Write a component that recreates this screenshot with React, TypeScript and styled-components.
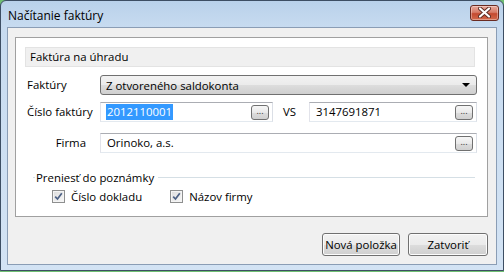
import React from 'react'
import styled, {createGlobalStyle} from 'styled-components'

const GlobalStyle = createGlobalStyle`
  html, body {
    margin: 0;
    padding: 0;
    background: #6fbf73;
  }
  body {
    font-family: 'Open Sans', 'Noto Sans', sans-serif;
    font-size: 11.4px;
    color: #000;
  }
`

export default function App() {
  return (
    <>
      <GlobalStyle />
      <Window>
        <TitleBar>
          <Title>Načítanie faktúry</Title>
          <CloseButton aria-label="close">
            <svg width="13" height="11" viewBox="0 0 13 11">
              <path
                d="M2 1.5 L11 9.5 M11 1.5 L2 9.5"
                stroke="#5a2a22"
                strokeWidth="4"
                strokeLinecap="round"
              />
              <path
                d="M2 1.5 L11 9.5 M11 1.5 L2 9.5"
                stroke="#fff"
                strokeWidth="2.2"
                strokeLinecap="round"
              />
            </svg>
          </CloseButton>
        </TitleBar>
        <Client>
          <Panel>
            <Header>Faktúra na úhradu</Header>
            <Form>
              <Label>Faktúry</Label>
              <Combo>
                <span>Z otvoreného saldokonta</span>
                <Arrow />
              </Combo>

              <Label>Číslo faktúry</Label>
              <SplitRow>
                <TextBox>
                  <Selected>2012110001</Selected>
                  <DotsButton>...</DotsButton>
                </TextBox>
                <VsLabel>VS</VsLabel>
                <TextBox>
                  <Value>3147691871</Value>
                  <DotsButton>...</DotsButton>
                </TextBox>
              </SplitRow>

              <Label align="right">Firma</Label>
              <TextBox>
                <Value>Orinoko, a.s.</Value>
                <DotsButton>...</DotsButton>
              </TextBox>
            </Form>
            <Group>
              <GroupTitle>
                <span>Preniesť do poznámky</span>
                <GroupLine />
              </GroupTitle>
              <Checks>
                <CheckItem>
                  <CheckBox />
                  Číslo dokladu
                </CheckItem>
                <CheckItem>
                  <CheckBox />
                  Názov firmy
                </CheckItem>
              </Checks>
            </Group>
          </Panel>
          <Buttons>
            <PushButton width={78}>Nová položka</PushButton>
            <PushButton width={80}>Zatvoriť</PushButton>
          </Buttons>
        </Client>
      </Window>
    </>
  )
}

function CheckBox() {
  return (
    <Box>
      <svg width="9" height="9" viewBox="0 0 9 9">
        <path
          d="M1.2 4.6 L3.5 7 L7.8 1.2"
          fill="none"
          stroke="#4d6185"
          strokeWidth="1.7"
        />
      </svg>
    </Box>
  )
}

const Window = styled.div`
  width: 504px;
  height: 271px;
  box-sizing: border-box;
  border: 1px solid #3d4e63;
  border-top-left-radius: 6px;
  border-top-right-radius: 6px;
  background: linear-gradient(#b9d1ea 0px, #c7dbf0 26px, #d3e3f4 100%);
  display: flex;
  flex-direction: column;
  padding: 0 6px 5px 6px;
`

const TitleBar = styled.div`
  height: 26px;
  display: flex;
  align-items: center;
  justify-content: space-between;
  flex-shrink: 0;
`

const Title = styled.div`
  font-size: 12px;
  padding-left: 1px;
  padding-top: 2px;
  color: #000;
`

const CloseButton = styled.div`
  width: 29px;
  height: 16px;
  margin-top: -3px;
  margin-right: -2px;
  box-sizing: border-box;
  border: 1px solid #6a2b22;
  border-radius: 3px;
  background: linear-gradient(#e9a99c 0%, #d77c68 45%, #c44a30 55%, #d36a4c 100%);
  display: flex;
  align-items: center;
  justify-content: center;
  box-shadow: inset 0 0 0 1px rgba(255, 255, 255, 0.35);
`

const Client = styled.div`
  flex: 1;
  background: #f0f0f0;
  border: 1px solid #8a9db5;
  display: flex;
  flex-direction: column;
  padding: 9px 8px 0 7px;
`

const Panel = styled.div`
  height: 180px;
  box-sizing: border-box;
  border: 1px solid #a0a0a0;
  background: #fff;
  padding: 9px 12px 0 9px;
`

const Header = styled.div`
  height: 20px;
  box-sizing: border-box;
  background: #f0f0f0;
  border: 1px solid #e3e3e3;
  padding-left: 4px;
  line-height: 18px;
`

const Form = styled.div`
  display: grid;
  grid-template-columns: 75px 377px;
  grid-auto-rows: 20px;
  row-gap: 7px;
  margin-top: 8px;

  & > :nth-child(5),
  & > :nth-child(6) {
    margin-top: 4px;
  }
`

const Label = styled.div<{align?: 'left' | 'right'}>`
  line-height: 20px;
  padding-left: 2px;
  text-align: ${(p) => p.align || 'left'};
  padding-right: ${(p) => (p.align === 'right' ? '14px' : '0')};
`

const Combo = styled.div`
  box-sizing: border-box;
  height: 20px;
  border: 1px solid #707070;
  border-radius: 3px;
  background: linear-gradient(#f2f2f2 0%, #ebebeb 50%, #dddddd 51%, #cfcfcf 100%);
  display: flex;
  align-items: center;
  justify-content: space-between;
  padding: 0 6px 0 5px;
`

const Arrow = styled.span`
  width: 0;
  height: 0;
  border-left: 4px solid transparent;
  border-right: 4px solid transparent;
  border-top: 4px solid #000;
`

const SplitRow = styled.div`
  display: grid;
  grid-template-columns: 173px 36px 1fr;
`

const TextBox = styled.div`
  box-sizing: border-box;
  height: 20px;
  border: 1px solid #abadb3;
  border-left-color: #e2e3ea;
  border-right-color: #dbdfe6;
  border-bottom-color: #e3e9ef;
  background: #fff;
  display: flex;
  align-items: center;
  justify-content: space-between;
  padding: 0 3px 0 6px;
`

const Value = styled.span`
  line-height: 16px;
`

const Selected = styled.span`
  background: #3399ff;
  color: #fff;
  line-height: 16px;
  padding: 0 1px;
  margin-left: -1px;
`

const DotsButton = styled.span`
  box-sizing: border-box;
  width: 18px;
  height: 15px;
  border: 1px solid #707070;
  border-radius: 3px;
  background: linear-gradient(#f6f6f6 0%, #e9e9e9 50%, #dcdcdc 51%, #d0d0d0 100%);
  font-size: 9px;
  line-height: 9px;
  text-align: center;
  color: #333;
`

const VsLabel = styled.span`
  line-height: 20px;
  padding-left: 10px;
`

const Group = styled.div`
  margin-top: 20px;
  padding-left: 8px;
`

const GroupTitle = styled.div`
  display: flex;
  align-items: center;
  gap: 1px;
  height: 16px;

  &::before {
    content: '';
    width: 2px;
    border-top: 1px solid #d5dfe5;
  }
`

const GroupLine = styled.span`
  flex: 1;
  margin-left: 3px;
  border-top: 1px solid #d5dfe5;
`

const Checks = styled.div`
  display: flex;
  gap: 28px;
  padding-left: 19px;
  margin-top: 4px;
`

const CheckItem = styled.label`
  display: flex;
  align-items: center;
  gap: 6px;
`

const Box = styled.span`
  box-sizing: border-box;
  width: 13px;
  height: 13px;
  border: 1px solid #8e8f8f;
  background: linear-gradient(135deg, #dcdcdc, #f8f8f8);
  display: flex;
  align-items: center;
  justify-content: center;
  box-shadow: inset 0 0 0 1px #f4f4f4;
`

const Buttons = styled.div`
  display: flex;
  justify-content: flex-end;
  gap: 8px;
  margin-top: 16px;
`

const PushButton = styled.div<{width: number}>`
  box-sizing: border-box;
  width: ${(p) => p.width}px;
  height: 23px;
  border: 1px solid #707070;
  border-radius: 3px;
  background: linear-gradient(#f2f2f2 0%, #ebebeb 50%, #dddddd 51%, #cfcfcf 100%);
  box-shadow: inset 0 0 0 1px #fcfcfc;
  display: flex;
  align-items: center;
  justify-content: center;
`
